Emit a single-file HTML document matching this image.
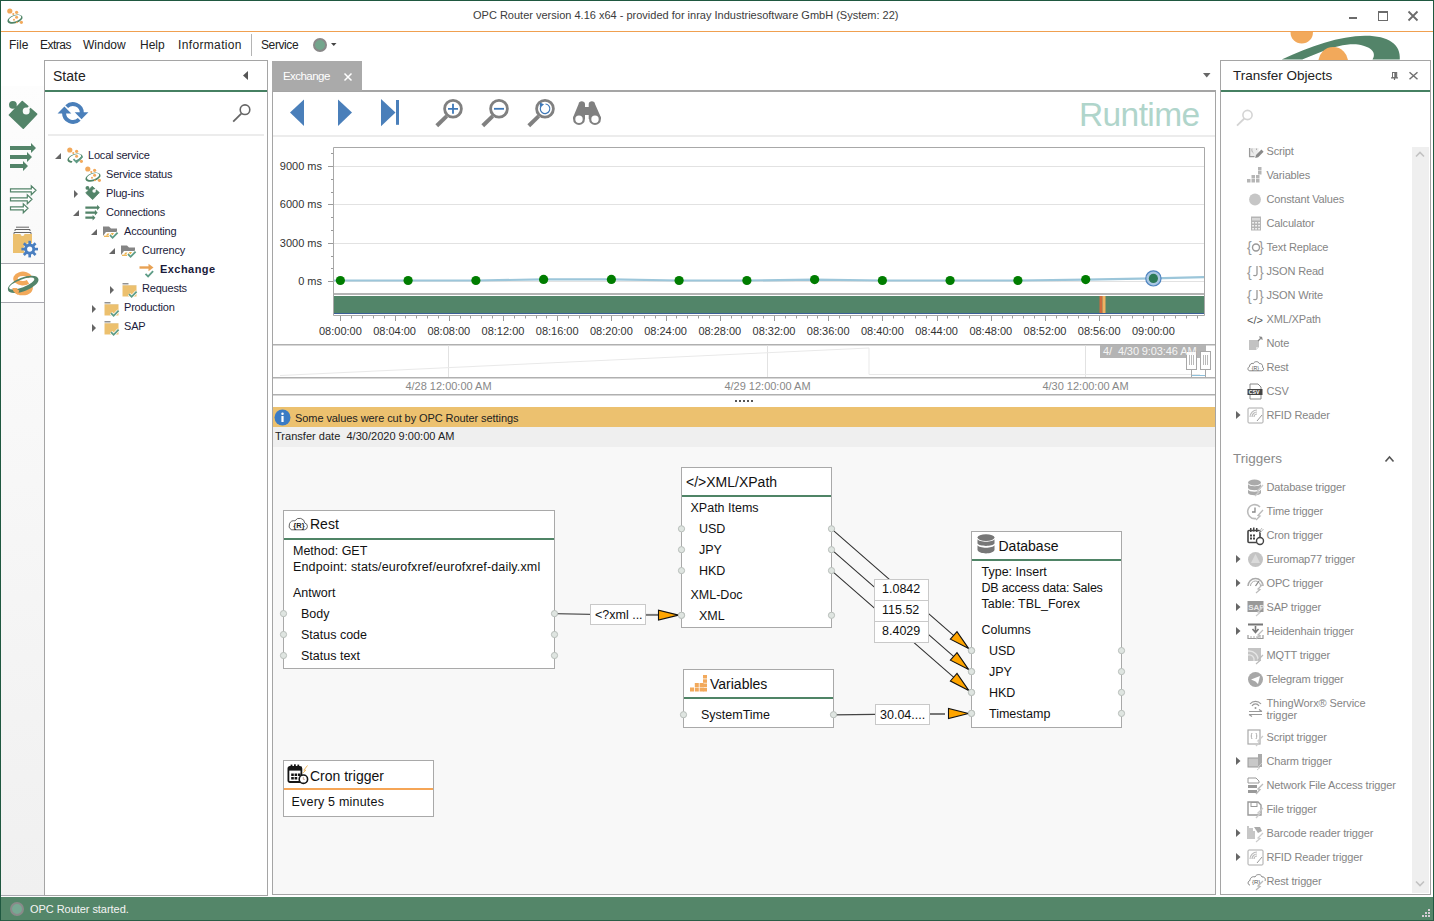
<!DOCTYPE html>
<html><head><meta charset="utf-8">
<style>
*{box-sizing:border-box;margin:0;padding:0}
html,body{width:1434px;height:921px;overflow:hidden;background:#fff;font-family:"Liberation Sans",sans-serif;color:#1e1e1e}
.a{position:absolute}
.t{position:absolute;white-space:nowrap;line-height:1}
svg{position:absolute;overflow:visible}
</style></head><body>
<!-- window frame -->
<div class="a" style="left:0;top:0;width:1434px;height:921px;border:1px solid #1f5840;border-bottom:none"></div>
<div class="a" style="left:1px;top:31px;width:1432px;height:1px;background:#f0a050"></div>

<!-- TITLEBAR -->
<svg style="left:7px;top:8px" width="18" height="18"><use href="#opclogo"/></svg>
<div class="t" style="left:473px;top:10px;font-size:11px;color:#3c3c3c">OPC Router version 4.16 x64 - provided for inray Industriesoftware GmbH (System: 22)</div>
<div class="a" style="left:1349px;top:17px;width:8px;height:2px;background:#6b6b6b"></div>
<div class="a" style="left:1378px;top:11px;width:10px;height:10px;border:1px solid #6b6b6b;border-top-width:2px"></div>
<svg style="left:1408px;top:11px" width="10" height="10"><path d="M0.5 0.5L9.5 9.5M9.5 0.5L0.5 9.5" stroke="#6b6b6b" stroke-width="1.8"/></svg>
<!-- big logo -->
<svg style="left:1270px;top:32px;overflow:hidden" width="150" height="28" viewBox="0 0 150 28">
<circle cx="31.75" cy="0.4" r="11.2" fill="#f2a95b"/>
<path d="M11.7 27.5 C 40 14, 70 4, 95 3.7 C 118 3.5, 131 12, 129.8 27.5 L102.5 27.5 C 106 22, 104 15, 88 12.4 C 78 11.5, 65 14, 50.8 20 L 32.2 27.5 Z" fill="#538469"/>
<circle cx="63.2" cy="30" r="14.9" fill="#f2a95b"/>
</svg>

<!-- MENU -->
<div class="t" style="left:9px;top:39px;font-size:12px;color:#222">File</div>
<div class="t" style="left:40px;top:39px;font-size:12px;color:#222;letter-spacing:-0.5px">Extras</div>
<div class="t" style="left:83px;top:39px;font-size:12px;color:#222">Window</div>
<div class="t" style="left:140px;top:39px;font-size:12px;color:#222">Help</div>
<div class="t" style="left:178px;top:39px;font-size:12px;color:#222;letter-spacing:0.35px">Information</div>
<div class="a" style="left:251px;top:34px;width:1px;height:22px;background:#b4b4b4"></div>
<div class="t" style="left:261px;top:39px;font-size:12px;color:#222;letter-spacing:-0.4px">Service</div>
<div class="a" style="left:313px;top:38px;width:14px;height:14px;border-radius:50%;background:#73a58c;border:2px solid #888"></div>
<svg style="left:331px;top:43px" width="6" height="4"><path d="M0 0H5.5L2.75 3Z" fill="#444"/></svg>

<!-- LEFT STRIP -->
<svg width="0" height="0" style="position:absolute">
<defs>
<g id="puzzle"><path d="M5.4 20 L18.3 6.6 L32.6 19.2 L19.3 33.2 Z" fill="#538469" stroke="#538469" stroke-width="1.6" stroke-linejoin="round"/><circle cx="8.9" cy="9.8" r="3.9" fill="#538469"/><path d="M8.9 9.8L13 13.8" stroke="#538469" stroke-width="2.8"/><circle cx="22.2" cy="15.9" r="3.5" fill="#fafafa"/><path d="M22.2 15.9L26.5 11" stroke="#fafafa" stroke-width="2.4"/></g>
<g id="arrows3"><path d="M6 8H27V5L32 10L27 15V12H6Z M6 17H23V14L28 19L23 24V21H6Z M6 26H19V23L24 28L19 33V30H6Z" fill="#538469"/></g>
<g id="chk"><path d="M0 3.2L2.6 5.8L7.6 0.6" fill="none" stroke="#5e9c86" stroke-width="1.8"/></g>
<g id="fold"><path d="M0.5 3 H14.5 V13.5 H0.5 Z" fill="#ecc06e"/><path d="M0.5 0.8 H6.5" stroke="#777" stroke-width="1.2"/><path d="M0.5 2.5H14.5" stroke="#d9a94f" stroke-width="0.6"/><g transform="translate(7,8)"><path d="M0 3.2L2.6 5.8L7.6 0.6" fill="none" stroke="#fff" stroke-width="3.2"/><use href="#chk"/></g></g>
<g id="foldopen"><path d="M0 0.5 H6 L8 2.5 H14 V6 H3 L0 10Z" fill="#858585"/><path d="M3 6.5 H14 L11.5 12.5 H0.3Z" fill="#fff"/><path d="M2.8 9.5 L4.5 7.4 H6.5 L5 9.5 Z M6.6 9.6 L8.5 7 H11 L9.5 9.6Z" fill="#ecb24c"/><path d="M1 10.3H6" stroke="#ecb24c" stroke-width="1.2"/><g transform="translate(7,6)"><path d="M0 3.2L2.6 5.8L7.6 0.6" fill="none" stroke="#fff" stroke-width="3.2"/><use href="#chk"/></g></g>
<g id="opclogo"><g transform="rotate(-19 8 11.2)"><path fill-rule="evenodd" fill="#4f8466" d="M0.1 11.2 A7.9 4.1 0 1 0 15.9 11.2 A7.9 4.1 0 1 0 0.1 11.2Z M1.9 10.6 A6.4 2.9 0 1 0 14.7 10.6 A6.4 2.9 0 1 0 1.9 10.6Z"/></g><circle cx="2.8" cy="3" r="2.6" fill="#f2a95b"/><circle cx="9.6" cy="4.3" r="1.6" fill="#f2a95b"/><circle cx="6.3" cy="6" r="1.1" fill="#f2a95b"/><circle cx="9.6" cy="9.3" r="1.5" fill="#f2a95b"/><circle cx="7" cy="11.7" r="1" fill="#f2a95b"/><circle cx="14.4" cy="14.3" r="1.6" fill="#f2a95b"/><circle cx="9.9" cy="14.3" r="0.9" fill="#f2a95b"/></g>
<g id="opclogochk"><g transform="rotate(-19 8 11.2)"><path fill-rule="evenodd" fill="#4f8466" d="M0.1 11.2 A7.9 4.1 0 1 0 15.9 11.2 A7.9 4.1 0 1 0 0.1 11.2Z M1.9 10.6 A6.4 2.9 0 1 0 14.7 10.6 A6.4 2.9 0 1 0 1.9 10.6Z"/></g><path d="M7 11 L11 16 L17 9 V17 H4Z" fill="#fff"/><path d="M6.5 12.2 L9.6 15.3 L15.5 9.3" fill="none" stroke="#5e9c86" stroke-width="1.8"/><circle cx="2.8" cy="3" r="2.6" fill="#f2a95b"/><circle cx="9.6" cy="4.3" r="1.6" fill="#f2a95b"/><circle cx="6.3" cy="6" r="1.1" fill="#f2a95b"/><circle cx="9.6" cy="9.3" r="1.5" fill="#f2a95b"/><circle cx="14.4" cy="14.3" r="1.6" fill="#f2a95b"/></g>
<g id="exp"><path d="M0 0L4 4L0 8Z" fill="#666"/></g>
<g id="col"><path d="M6 0V6H0Z" fill="#666"/></g>
</defs></svg>
<div class="a" style="left:1px;top:86px;width:44px;height:178px;background:linear-gradient(#fdfdfd,#f9f9f9);border-right:1px solid #a9a9b0;border-bottom:1px solid #a9a9b0"></div>
<div class="a" style="left:1px;top:302px;width:44px;height:594px;background:linear-gradient(#fafafa,#f0f0f0);border-right:1px solid #a9a9b0;border-top:1px solid #a9a9b0;border-bottom:1px solid #a9a9b0"></div>
<svg style="left:4px;top:95px" width="40" height="40"><use href="#puzzle"/></svg>
<svg style="left:4px;top:138px" width="40" height="40"><use href="#arrows3"/></svg>
<svg style="left:4px;top:180px" width="40" height="40"><path d="M6.5 50.8H27.3V47.8L32 52.3L27.3 56.8V53.8H6.5Z M6.5 59.8H23.3V56.8L28 61.3L23.3 65.8V62.8H6.5Z M6.5 68.8H19.3V65.8L24 70.3L19.3 74.8V71.8H6.5Z" transform="translate(0,-42)" fill="#fff" stroke="#538469" stroke-width="1.2"/></svg>
<svg style="left:4px;top:220px" width="40" height="44">
<path d="M12 7.2 H25" stroke="#666" stroke-width="1"/><path d="M11 11 V9.5 H26 V11" fill="none" stroke="#666" stroke-width="1"/><path d="M10 14 V12.5 H27 V14" fill="none" stroke="#666" stroke-width="1"/>
<path d="M9 14 H16.5 A2 2 0 0 0 20.5 14 H28 V33 H9Z" fill="#ecc06e"/>
<g transform="translate(25.7 29.1)"><circle r="6.2" fill="#fff"/><g fill="#4a7fc0"><rect x="-1.3" y="-8.3" width="2.6" height="16.6"/><rect y="-1.3" x="-8.3" height="2.6" width="16.6"/><rect x="-1.3" y="-8.3" width="2.6" height="16.6" transform="rotate(45)"/><rect x="-1.3" y="-8.3" width="2.6" height="16.6" transform="rotate(-45)"/></g><circle r="5.6" fill="#4a7fc0"/><circle r="2.6" fill="#fff"/></g>
</svg>
<div class="a" style="left:44px;top:264px;width:1px;height:38px;background:#fff"></div>
<svg style="left:4px;top:264px" width="40" height="36" viewBox="0 0 40 36">
<path d="M26 13.3 A7.4 4.7 0 1 0 24 17.9" fill="none" stroke="#f2a95b" stroke-width="4.4"/>
<path d="M10.8 24.2 A7.9 5 0 1 0 25.5 21.6" fill="none" stroke="#f2a95b" stroke-width="4.4"/>
<g transform="rotate(-21 19 20)"><path fill-rule="evenodd" fill="#538469" d="M2.8 20.5 A16.2 6.8 0 1 0 35.2 20.5 A16.2 6.8 0 1 0 2.8 20.5Z M4.6 19.1 A13.4 3.9 0 1 0 31.4 19.1 A13.4 3.9 0 1 0 4.6 19.1Z"/></g>
<path d="M10.8 24.2 A7.9 5 0 0 0 14.5 28.6" fill="none" stroke="#f2a95b" stroke-width="4.4"/>
</svg>

<!-- STATE PANEL -->
<div class="a" style="left:44px;top:60px;width:224px;height:836px;border:1px solid #a5a5a5;background:#fff"></div>
<div class="a" style="left:45px;top:90px;width:222px;height:2px;background:#468062"></div>
<div class="t" style="left:53px;top:69px;font-size:14px;color:#222">State</div>
<svg style="left:243px;top:71px" width="6" height="10"><path d="M0 4.5L5 0V9Z" fill="#555"/></svg>
<svg style="left:54px;top:98px" width="38" height="30">
<path d="M12.66 8.7 A8.9 8.9 0 0 1 27.85 15" fill="none" stroke="#4a7fba" stroke-width="4"/>
<path d="M20.7 14.3 H34.4 L27.5 21.2Z" fill="#4a7fba"/>
<path d="M10.05 15 A8.9 8.9 0 0 0 25.24 21.3" fill="none" stroke="#4a7fba" stroke-width="4"/>
<path d="M3.6 15.6 H17.3 L10.4 8.6Z" fill="#4a7fba"/>
</svg>
<svg style="left:230px;top:100px" width="22" height="24"><circle cx="15" cy="9.7" r="4.8" fill="none" stroke="#666" stroke-width="1.6"/><path d="M11.3 13.7L3.2 21.6" stroke="#666" stroke-width="1.8"/></svg>
<div class="a" style="left:48px;top:134px;width:216px;height:2px;background:#ececec"></div>
<div style="font-size:11px;letter-spacing:-0.2px;color:#1a1a3a">
<svg style="left:55px;top:153px" width="7" height="7"><use href="#col"/></svg>
<svg style="left:67px;top:147px" width="18" height="18"><use href="#opclogochk"/></svg>
<div class="t" style="left:88px;top:150px">Local service</div>
<svg style="left:85px;top:166px" width="18" height="18"><use href="#opclogo"/></svg>
<div class="t" style="left:106px;top:169px">Service status</div>
<svg style="left:74px;top:190px" width="6" height="9"><use href="#exp"/></svg>
<svg style="left:83px;top:183px" width="20" height="20"><g transform="scale(0.5)"><use href="#puzzle"/></g></svg>
<div class="t" style="left:106px;top:188px">Plug-ins</div>
<svg style="left:73px;top:210px" width="7" height="7"><use href="#col"/></svg>
<svg style="left:82px;top:201.5px" width="22" height="22"><g transform="scale(0.56)"><use href="#arrows3"/></g></svg>
<div class="t" style="left:106px;top:207px">Connections</div>
<svg style="left:91px;top:229px" width="7" height="7"><use href="#col"/></svg>
<svg style="left:103px;top:226px" width="18" height="16"><use href="#foldopen"/></svg>
<div class="t" style="left:124px;top:226px">Accounting</div>
<svg style="left:109px;top:248px" width="7" height="7"><use href="#col"/></svg>
<svg style="left:121px;top:245px" width="18" height="16"><use href="#foldopen"/></svg>
<div class="t" style="left:142px;top:245px">Currency</div>
<svg style="left:139px;top:263px" width="18" height="16"><path d="M0.5 4.5H11" stroke="#e8a255" stroke-width="2.4"/><path d="M9.5 0.8L14.5 4.5L9.5 8.2Z" fill="#e8a255"/><g transform="translate(6.5,7.6)"><path d="M0 3.2L2.6 5.8L7.6 0.6" fill="none" stroke="#fff" stroke-width="3.2"/><use href="#chk"/></g></svg>
<div class="t" style="left:160px;top:264px;font-weight:bold;letter-spacing:0.45px">Exchange</div>
<svg style="left:110px;top:286px" width="6" height="9"><use href="#exp"/></svg>
<svg style="left:122px;top:283px" width="18" height="16"><use href="#fold"/></svg>
<div class="t" style="left:142px;top:283px">Requests</div>
<svg style="left:92px;top:305px" width="6" height="9"><use href="#exp"/></svg>
<svg style="left:104px;top:302px" width="18" height="16"><use href="#fold"/></svg>
<div class="t" style="left:124px;top:302px">Production</div>
<svg style="left:92px;top:324px" width="6" height="9"><use href="#exp"/></svg>
<svg style="left:104px;top:321px" width="18" height="16"><use href="#fold"/></svg>
<div class="t" style="left:124px;top:321px">SAP</div>
</div>

<!-- DOC AREA -->
<div class="a" style="left:272px;top:90px;width:944px;height:805px;border:1px solid #a5a5a5;border-top:2px solid #a5a5a5;background:#fff"></div>
<div class="a" style="left:272px;top:61px;width:90px;height:30px;background:#aaaaaa"></div>
<div class="t" style="left:283px;top:71px;font-size:11.5px;letter-spacing:-0.55px;color:#fff">Exchange</div>
<svg style="left:344px;top:73px" width="8" height="8"><path d="M0.5 0.5L7.5 7.5M7.5 0.5L0.5 7.5" stroke="#fff" stroke-width="1.5"/></svg>
<svg style="left:1203px;top:73px" width="8" height="5"><path d="M0 0H7.5L3.75 4.5Z" fill="#666"/></svg>
<!-- toolbar -->
<svg style="left:273px;top:92px" width="942" height="46">
<path d="M17 20.5 L31 7.5 V34 Z" fill="#4a7fba"/>
<path d="M79 20.5 L65 7.5 V34 Z" fill="#4a7fba"/>
<path d="M122.5 20.5 L108 7 V34.2 Z" fill="#4a7fba"/>
<rect x="123" y="8" width="3" height="24.8" fill="#4a7fba"/>
<g transform="translate(180,16.8)"><circle r="8.4" fill="none" stroke="#808080" stroke-width="2.8"/><path d="M-6.3 7.3 L-16.2 17" stroke="#808080" stroke-width="4"/><path d="M-5 0H5M0 -5V5" stroke="#3e78b8" stroke-width="1.8"/></g>
<g transform="translate(226,16.8)"><circle r="8.4" fill="none" stroke="#808080" stroke-width="2.8"/><path d="M-6.3 7.3 L-16.2 17" stroke="#808080" stroke-width="4"/><path d="M-5 0H5" stroke="#3e78b8" stroke-width="1.8"/></g>
<g transform="translate(272,16.8)"><circle r="8.4" fill="none" stroke="#808080" stroke-width="2.8"/><path d="M-6.3 7.3 L-16.2 17" stroke="#808080" stroke-width="4"/><path d="M-2.6 -4 A4.8 4.8 0 1 0 0.5 -4.8" fill="none" stroke="#3e78b8" stroke-width="1.2"/><path d="M-5.2 -1.8 L-4.9 -6.3 L-0.9 -4.2Z" fill="#3e78b8"/></g>
<g fill="#808080"><path d="M305.6 12 C305.6 8.3 312 8.3 312 12 V27 H300 V25.5Z"/><path d="M322 12 C322 8.3 315.7 8.3 315.7 12 V27 H328 V25.5Z"/><rect x="311" y="15" width="6" height="8"/></g>
<circle cx="306" cy="27.2" r="4.8" fill="#fff" stroke="#808080" stroke-width="2.2"/><circle cx="322" cy="27.2" r="4.8" fill="#fff" stroke="#808080" stroke-width="2.2"/>
</svg>
<div class="t" style="left:1079px;top:98px;font-size:33.5px;letter-spacing:-0.6px;color:#b0d5cb">Runtime</div>
<div class="a" style="left:273px;top:135px;width:942px;height:2px;background:#ececec"></div>
<!-- chart -->
<svg style="left:0;top:0" width="1434" height="921">
<path d="M334 166.5H1204" stroke="#e2e2e2" stroke-width="1"/>
<path d="M328 166.5H333" stroke="#9a9a9a" stroke-width="1"/>
<path d="M334 204.5H1204" stroke="#e2e2e2" stroke-width="1"/>
<path d="M328 204.5H333" stroke="#9a9a9a" stroke-width="1"/>
<path d="M334 243.5H1204" stroke="#e2e2e2" stroke-width="1"/>
<path d="M328 243.5H333" stroke="#9a9a9a" stroke-width="1"/>
<path d="M334 281.5H1204" stroke="#e2e2e2" stroke-width="1"/>
<path d="M328 281.5H333" stroke="#9a9a9a" stroke-width="1"/>
<path d="M331 153.5H333" stroke="#9a9a9a" stroke-width="1"/>
<path d="M331 179.5H333" stroke="#9a9a9a" stroke-width="1"/>
<path d="M331 192.5H333" stroke="#9a9a9a" stroke-width="1"/>
<path d="M331 217.5H333" stroke="#9a9a9a" stroke-width="1"/>
<path d="M331 230.5H333" stroke="#9a9a9a" stroke-width="1"/>
<path d="M331 256.5H333" stroke="#9a9a9a" stroke-width="1"/>
<path d="M331 268.5H333" stroke="#9a9a9a" stroke-width="1"/>
<path d="M333.5 315.5V147.5H1204.5V315.5H333.5" fill="none" stroke="#a8a8a8" stroke-width="1"/>
<path d="M334 280.5 L340.4 280.5 L408.1 280.5 L475.9 280.5 L543.6 279.4 L611.4 279.4 L679.1 280.5 L746.9 280.5 L814.6 279.6 L882.4 280.5 L950.1 280.5 L1017.9 280.5 L1085.7 279.6 L1153.4 278.4 L1204 277.2" fill="none" stroke="#9cc6da" stroke-width="2.2"/>
<circle cx="340.4" cy="280.5" r="4.6" fill="#007d00"/>
<circle cx="408.1" cy="280.5" r="4.6" fill="#007d00"/>
<circle cx="475.9" cy="280.5" r="4.6" fill="#007d00"/>
<circle cx="543.6" cy="279.4" r="4.6" fill="#007d00"/>
<circle cx="611.4" cy="279.4" r="4.6" fill="#007d00"/>
<circle cx="679.1" cy="280.5" r="4.6" fill="#007d00"/>
<circle cx="746.9" cy="280.5" r="4.6" fill="#007d00"/>
<circle cx="814.6" cy="279.6" r="4.6" fill="#007d00"/>
<circle cx="882.4" cy="280.5" r="4.6" fill="#007d00"/>
<circle cx="950.1" cy="280.5" r="4.6" fill="#007d00"/>
<circle cx="1017.9" cy="280.5" r="4.6" fill="#007d00"/>
<circle cx="1085.7" cy="279.6" r="4.6" fill="#007d00"/>
<circle cx="1153.4" cy="278.4" r="7.6" fill="#a9c7e3" stroke="#4f84c0" stroke-width="1.2"/>
<circle cx="1153.4" cy="278.4" r="4.6" fill="#2c7a58"/>
<rect x="334" y="293" width="870" height="2" fill="#b4b4b4"/>
<rect x="334" y="296" width="870" height="17.5" fill="#528569"/>
<rect x="334" y="313" width="870" height="1" fill="#3b5f96"/>
<rect x="1099.5" y="296" width="3" height="17" fill="#cf6a3e"/><rect x="1102.5" y="296" width="3" height="17" fill="#f0b262"/>
<path d="M340.5 316V321" stroke="#9a9a9a" stroke-width="1"/>
<path d="M351.5 316V318.5" stroke="#9a9a9a" stroke-width="1"/>
<path d="M362.5 316V318.5" stroke="#9a9a9a" stroke-width="1"/>
<path d="M373.5 316V318.5" stroke="#9a9a9a" stroke-width="1"/>
<path d="M384.5 316V318.5" stroke="#9a9a9a" stroke-width="1"/>
<path d="M395.5 316V321" stroke="#9a9a9a" stroke-width="1"/>
<path d="M405.5 316V318.5" stroke="#9a9a9a" stroke-width="1"/>
<path d="M416.5 316V318.5" stroke="#9a9a9a" stroke-width="1"/>
<path d="M427.5 316V318.5" stroke="#9a9a9a" stroke-width="1"/>
<path d="M438.5 316V318.5" stroke="#9a9a9a" stroke-width="1"/>
<path d="M449.5 316V321" stroke="#9a9a9a" stroke-width="1"/>
<path d="M460.5 316V318.5" stroke="#9a9a9a" stroke-width="1"/>
<path d="M470.5 316V318.5" stroke="#9a9a9a" stroke-width="1"/>
<path d="M481.5 316V318.5" stroke="#9a9a9a" stroke-width="1"/>
<path d="M492.5 316V318.5" stroke="#9a9a9a" stroke-width="1"/>
<path d="M503.5 316V321" stroke="#9a9a9a" stroke-width="1"/>
<path d="M514.5 316V318.5" stroke="#9a9a9a" stroke-width="1"/>
<path d="M525.5 316V318.5" stroke="#9a9a9a" stroke-width="1"/>
<path d="M536.5 316V318.5" stroke="#9a9a9a" stroke-width="1"/>
<path d="M546.5 316V318.5" stroke="#9a9a9a" stroke-width="1"/>
<path d="M557.5 316V321" stroke="#9a9a9a" stroke-width="1"/>
<path d="M568.5 316V318.5" stroke="#9a9a9a" stroke-width="1"/>
<path d="M579.5 316V318.5" stroke="#9a9a9a" stroke-width="1"/>
<path d="M590.5 316V318.5" stroke="#9a9a9a" stroke-width="1"/>
<path d="M601.5 316V318.5" stroke="#9a9a9a" stroke-width="1"/>
<path d="M611.5 316V321" stroke="#9a9a9a" stroke-width="1"/>
<path d="M622.5 316V318.5" stroke="#9a9a9a" stroke-width="1"/>
<path d="M633.5 316V318.5" stroke="#9a9a9a" stroke-width="1"/>
<path d="M644.5 316V318.5" stroke="#9a9a9a" stroke-width="1"/>
<path d="M655.5 316V318.5" stroke="#9a9a9a" stroke-width="1"/>
<path d="M666.5 316V321" stroke="#9a9a9a" stroke-width="1"/>
<path d="M676.5 316V318.5" stroke="#9a9a9a" stroke-width="1"/>
<path d="M687.5 316V318.5" stroke="#9a9a9a" stroke-width="1"/>
<path d="M698.5 316V318.5" stroke="#9a9a9a" stroke-width="1"/>
<path d="M709.5 316V318.5" stroke="#9a9a9a" stroke-width="1"/>
<path d="M720.5 316V321" stroke="#9a9a9a" stroke-width="1"/>
<path d="M731.5 316V318.5" stroke="#9a9a9a" stroke-width="1"/>
<path d="M741.5 316V318.5" stroke="#9a9a9a" stroke-width="1"/>
<path d="M752.5 316V318.5" stroke="#9a9a9a" stroke-width="1"/>
<path d="M763.5 316V318.5" stroke="#9a9a9a" stroke-width="1"/>
<path d="M774.5 316V321" stroke="#9a9a9a" stroke-width="1"/>
<path d="M785.5 316V318.5" stroke="#9a9a9a" stroke-width="1"/>
<path d="M796.5 316V318.5" stroke="#9a9a9a" stroke-width="1"/>
<path d="M807.5 316V318.5" stroke="#9a9a9a" stroke-width="1"/>
<path d="M817.5 316V318.5" stroke="#9a9a9a" stroke-width="1"/>
<path d="M828.5 316V321" stroke="#9a9a9a" stroke-width="1"/>
<path d="M839.5 316V318.5" stroke="#9a9a9a" stroke-width="1"/>
<path d="M850.5 316V318.5" stroke="#9a9a9a" stroke-width="1"/>
<path d="M861.5 316V318.5" stroke="#9a9a9a" stroke-width="1"/>
<path d="M872.5 316V318.5" stroke="#9a9a9a" stroke-width="1"/>
<path d="M882.5 316V321" stroke="#9a9a9a" stroke-width="1"/>
<path d="M893.5 316V318.5" stroke="#9a9a9a" stroke-width="1"/>
<path d="M904.5 316V318.5" stroke="#9a9a9a" stroke-width="1"/>
<path d="M915.5 316V318.5" stroke="#9a9a9a" stroke-width="1"/>
<path d="M926.5 316V318.5" stroke="#9a9a9a" stroke-width="1"/>
<path d="M937.5 316V321" stroke="#9a9a9a" stroke-width="1"/>
<path d="M947.5 316V318.5" stroke="#9a9a9a" stroke-width="1"/>
<path d="M958.5 316V318.5" stroke="#9a9a9a" stroke-width="1"/>
<path d="M969.5 316V318.5" stroke="#9a9a9a" stroke-width="1"/>
<path d="M980.5 316V318.5" stroke="#9a9a9a" stroke-width="1"/>
<path d="M991.5 316V321" stroke="#9a9a9a" stroke-width="1"/>
<path d="M1002.5 316V318.5" stroke="#9a9a9a" stroke-width="1"/>
<path d="M1012.5 316V318.5" stroke="#9a9a9a" stroke-width="1"/>
<path d="M1023.5 316V318.5" stroke="#9a9a9a" stroke-width="1"/>
<path d="M1034.5 316V318.5" stroke="#9a9a9a" stroke-width="1"/>
<path d="M1045.5 316V321" stroke="#9a9a9a" stroke-width="1"/>
<path d="M1056.5 316V318.5" stroke="#9a9a9a" stroke-width="1"/>
<path d="M1067.5 316V318.5" stroke="#9a9a9a" stroke-width="1"/>
<path d="M1078.5 316V318.5" stroke="#9a9a9a" stroke-width="1"/>
<path d="M1088.5 316V318.5" stroke="#9a9a9a" stroke-width="1"/>
<path d="M1099.5 316V321" stroke="#9a9a9a" stroke-width="1"/>
<path d="M1110.5 316V318.5" stroke="#9a9a9a" stroke-width="1"/>
<path d="M1121.5 316V318.5" stroke="#9a9a9a" stroke-width="1"/>
<path d="M1132.5 316V318.5" stroke="#9a9a9a" stroke-width="1"/>
<path d="M1143.5 316V318.5" stroke="#9a9a9a" stroke-width="1"/>
<path d="M1153.5 316V321" stroke="#9a9a9a" stroke-width="1"/>
<path d="M1164.5 316V318.5" stroke="#9a9a9a" stroke-width="1"/>
<path d="M1175.5 316V318.5" stroke="#9a9a9a" stroke-width="1"/>
<path d="M1186.5 316V318.5" stroke="#9a9a9a" stroke-width="1"/>
<path d="M1197.5 316V318.5" stroke="#9a9a9a" stroke-width="1"/>
<rect x="273" y="344" width="942" height="1.5" fill="#b0b0b0"/>
<rect x="273" y="377" width="942" height="1.5" fill="#b0b0b0"/>
<rect x="273" y="394" width="942" height="1.5" fill="#b0b0b0"/>
<path d="M448.5 345.5V377" stroke="#e2e2e2" stroke-width="1"/>
<path d="M767.5 345.5V377" stroke="#e2e2e2" stroke-width="1"/>
<path d="M1085.5 345.5V377" stroke="#e2e2e2" stroke-width="1"/>
<path d="M280 375.5 L869 348 V374.5 H1200" fill="none" stroke="#e9e9e9" stroke-width="1"/>
<rect x="1100" y="345" width="106" height="13" fill="#b4b4b4"/>
<rect x="1186.5" y="351.5" width="10" height="18" fill="#fff" stroke="#a8a8a8"/><rect x="1200.5" y="351.5" width="10" height="18" fill="#fff" stroke="#a8a8a8"/>
<path d="M1189.5 355V365M1191.5 355V365M1193.5 355V365M1203.5 355V365M1205.5 355V365M1207.5 355V365" stroke="#a8a8a8" stroke-width="0.8"/>
<path d="M1191.5 369.5V377M1205.5 369.5V377" stroke="#a8a8a8"/><path d="M1192 375.5H1205" stroke="#8cc0dc" stroke-width="1"/>
<rect x="735" y="400" width="2" height="2" fill="#555"/>
<rect x="739" y="400" width="2" height="2" fill="#555"/>
<rect x="743" y="400" width="2" height="2" fill="#555"/>
<rect x="747" y="400" width="2" height="2" fill="#555"/>
<rect x="751" y="400" width="2" height="2" fill="#555"/>
</svg>
<div class="t" style="left:222px;width:100px;text-align:right;top:161px;font-size:11px;color:#333">9000 ms</div>
<div class="t" style="left:222px;width:100px;text-align:right;top:199px;font-size:11px;color:#333">6000 ms</div>
<div class="t" style="left:222px;width:100px;text-align:right;top:238px;font-size:11px;color:#333">3000 ms</div>
<div class="t" style="left:222px;width:100px;text-align:right;top:276px;font-size:11px;color:#333">0 ms</div>
<div class="t" style="left:310.4px;width:60px;text-align:center;top:326px;font-size:11px;color:#333">08:00:00</div>
<div class="t" style="left:364.6px;width:60px;text-align:center;top:326px;font-size:11px;color:#333">08:04:00</div>
<div class="t" style="left:418.8px;width:60px;text-align:center;top:326px;font-size:11px;color:#333">08:08:00</div>
<div class="t" style="left:473.0px;width:60px;text-align:center;top:326px;font-size:11px;color:#333">08:12:00</div>
<div class="t" style="left:527.2px;width:60px;text-align:center;top:326px;font-size:11px;color:#333">08:16:00</div>
<div class="t" style="left:581.4px;width:60px;text-align:center;top:326px;font-size:11px;color:#333">08:20:00</div>
<div class="t" style="left:635.6px;width:60px;text-align:center;top:326px;font-size:11px;color:#333">08:24:00</div>
<div class="t" style="left:689.8px;width:60px;text-align:center;top:326px;font-size:11px;color:#333">08:28:00</div>
<div class="t" style="left:744.0px;width:60px;text-align:center;top:326px;font-size:11px;color:#333">08:32:00</div>
<div class="t" style="left:798.2px;width:60px;text-align:center;top:326px;font-size:11px;color:#333">08:36:00</div>
<div class="t" style="left:852.4px;width:60px;text-align:center;top:326px;font-size:11px;color:#333">08:40:00</div>
<div class="t" style="left:906.6px;width:60px;text-align:center;top:326px;font-size:11px;color:#333">08:44:00</div>
<div class="t" style="left:960.8px;width:60px;text-align:center;top:326px;font-size:11px;color:#333">08:48:00</div>
<div class="t" style="left:1015.0px;width:60px;text-align:center;top:326px;font-size:11px;color:#333">08:52:00</div>
<div class="t" style="left:1069.2px;width:60px;text-align:center;top:326px;font-size:11px;color:#333">08:56:00</div>
<div class="t" style="left:1123.4px;width:60px;text-align:center;top:326px;font-size:11px;color:#333">09:00:00</div>
<div class="t" style="left:388.5px;width:120px;text-align:center;top:381px;font-size:11px;color:#888">4/28 12:00:00 AM</div>
<div class="t" style="left:707.5px;width:120px;text-align:center;top:381px;font-size:11px;color:#888">4/29 12:00:00 AM</div>
<div class="t" style="left:1025.5px;width:120px;text-align:center;top:381px;font-size:11px;color:#888">4/30 12:00:00 AM</div>
<div class="t" style="left:1103px;top:346px;font-size:11px;color:#f4f4f4;letter-spacing:-0.1px">4/&nbsp; 4/30 9:03:46 AM</div>
<!-- info -->
<div class="a" style="left:273px;top:407px;width:942px;height:20px;background:#ecc16f"></div>
<svg style="left:274px;top:409px" width="18" height="17"><circle cx="8.5" cy="8.5" r="8" fill="#3b7bc4"/><rect x="7.4" y="7" width="2.2" height="6" fill="#fff"/><circle cx="8.5" cy="4.7" r="1.25" fill="#fff"/></svg>
<div class="t" style="left:295px;top:413px;font-size:11px;letter-spacing:-0.08px;color:#222">Some values were cut by OPC Router settings</div>
<div class="a" style="left:273px;top:427px;width:942px;height:20px;background:#efefef"></div>
<div class="t" style="left:275px;top:431px;font-size:11px;letter-spacing:0.02px;color:#222">Transfer date&nbsp; 4/30/2020 9:00:00 AM</div>
<div class="a" style="left:273px;top:447px;width:942px;height:447px;background:#f8f8f8"></div>
<svg style="left:0;top:0" width="1434" height="921">
<path d="M555 613.6 L590 614.3" stroke="#555" stroke-width="1.3"/>
<path d="M646 614.9 H660" stroke="#777" stroke-width="2"/>
<path d="M831.5 528.8 L971 650.6 M831.5 549.7 L971 671.6 M831.5 570.6 L971 692.4" stroke="#333" stroke-width="1.1"/>
<path d="M833.6 714.9 L875 714.3" stroke="#444" stroke-width="1.3"/><path d="M930 714 H945" stroke="#777" stroke-width="2"/>
<rect x="283.5" y="510.5" width="271" height="158" fill="#fff" stroke="#a9a9a9"/>
<rect x="284" y="538" width="270" height="2" fill="#4f8466"/>
<circle cx="283.5" cy="613.6" r="3.1" fill="#dfe5e1" stroke="#b9bfbb" stroke-width="1"/>
<circle cx="554.5" cy="613.6" r="3.1" fill="#dfe5e1" stroke="#b9bfbb" stroke-width="1"/>
<circle cx="283.5" cy="634.5" r="3.1" fill="#dfe5e1" stroke="#b9bfbb" stroke-width="1"/>
<circle cx="554.5" cy="634.5" r="3.1" fill="#dfe5e1" stroke="#b9bfbb" stroke-width="1"/>
<circle cx="283.5" cy="655.5" r="3.1" fill="#dfe5e1" stroke="#b9bfbb" stroke-width="1"/>
<circle cx="554.5" cy="655.5" r="3.1" fill="#dfe5e1" stroke="#b9bfbb" stroke-width="1"/>
<rect x="681.5" y="467.5" width="150" height="160" fill="#fff" stroke="#a9a9a9"/>
<rect x="682" y="495" width="149" height="2" fill="#4f8466"/>
<circle cx="681.5" cy="528.8" r="3.1" fill="#dfe5e1" stroke="#b9bfbb" stroke-width="1"/>
<circle cx="831.5" cy="528.8" r="3.1" fill="#dfe5e1" stroke="#b9bfbb" stroke-width="1"/>
<circle cx="681.5" cy="549.7" r="3.1" fill="#dfe5e1" stroke="#b9bfbb" stroke-width="1"/>
<circle cx="831.5" cy="549.7" r="3.1" fill="#dfe5e1" stroke="#b9bfbb" stroke-width="1"/>
<circle cx="681.5" cy="570.6" r="3.1" fill="#dfe5e1" stroke="#b9bfbb" stroke-width="1"/>
<circle cx="831.5" cy="570.6" r="3.1" fill="#dfe5e1" stroke="#b9bfbb" stroke-width="1"/>
<circle cx="681.5" cy="615.3" r="3.1" fill="#dfe5e1" stroke="#b9bfbb" stroke-width="1"/>
<circle cx="831.5" cy="615.3" r="3.1" fill="#dfe5e1" stroke="#b9bfbb" stroke-width="1"/>
<rect x="971.5" y="531.5" width="150" height="196" fill="#fff" stroke="#a9a9a9"/>
<rect x="972" y="559" width="149" height="2" fill="#4f8466"/>
<circle cx="971.5" cy="650.6" r="3.1" fill="#dfe5e1" stroke="#b9bfbb" stroke-width="1"/>
<circle cx="1121.5" cy="650.6" r="3.1" fill="#dfe5e1" stroke="#b9bfbb" stroke-width="1"/>
<circle cx="971.5" cy="671.6" r="3.1" fill="#dfe5e1" stroke="#b9bfbb" stroke-width="1"/>
<circle cx="1121.5" cy="671.6" r="3.1" fill="#dfe5e1" stroke="#b9bfbb" stroke-width="1"/>
<circle cx="971.5" cy="692.4" r="3.1" fill="#dfe5e1" stroke="#b9bfbb" stroke-width="1"/>
<circle cx="1121.5" cy="692.4" r="3.1" fill="#dfe5e1" stroke="#b9bfbb" stroke-width="1"/>
<circle cx="971.5" cy="713.4" r="3.1" fill="#dfe5e1" stroke="#b9bfbb" stroke-width="1"/>
<circle cx="1121.5" cy="713.4" r="3.1" fill="#dfe5e1" stroke="#b9bfbb" stroke-width="1"/>
<rect x="683.5" y="669.5" width="150" height="58" fill="#fff" stroke="#a9a9a9"/>
<rect x="684" y="697" width="149" height="2" fill="#4f8466"/>
<circle cx="683.5" cy="714.7" r="3.1" fill="#dfe5e1" stroke="#b9bfbb" stroke-width="1"/>
<circle cx="833.5" cy="714.7" r="3.1" fill="#dfe5e1" stroke="#b9bfbb" stroke-width="1"/>
<rect x="283.5" y="760.5" width="150" height="56" fill="#fff" stroke="#a9a9a9"/>
<rect x="284" y="788" width="149" height="2" fill="#f5a556"/>
<rect x="590.5" y="604.5" width="55" height="20" fill="#fff" stroke="#c9c9c9"/>
<rect x="874.5" y="579.5" width="54" height="21" fill="#fff" stroke="#c9c9c9"/>
<rect x="874.5" y="600.5" width="54" height="21" fill="#fff" stroke="#c9c9c9"/>
<rect x="874.5" y="621.5" width="54" height="21" fill="#fff" stroke="#c9c9c9"/>
<rect x="875.5" y="704.5" width="54" height="20" fill="#fff" stroke="#c9c9c9"/>
<path d="M678.5 615.1 L658.5 620.1 L658.5 610.1Z" fill="#ffa500" stroke="#111" stroke-width="1.1" stroke-linejoin="miter"/>
<path d="M968.5 713.5 L948.5 718.5 L948.5 708.5Z" fill="#ffa500" stroke="#111" stroke-width="1.1" stroke-linejoin="miter"/>
<path d="M968.7 648.6 L950.4 639.2 L957.0 631.7Z" fill="#ffa500" stroke="#111" stroke-width="1.1" stroke-linejoin="miter"/>
<path d="M968.7 669.6 L950.4 660.2 L957.0 652.7Z" fill="#ffa500" stroke="#111" stroke-width="1.1" stroke-linejoin="miter"/>
<path d="M968.7 690.4 L950.4 681.0 L957.0 673.5Z" fill="#ffa500" stroke="#111" stroke-width="1.1" stroke-linejoin="miter"/>
<circle cx="681.5" cy="615.3" r="3.1" fill="#dfe5e1" stroke="#b9bfbb" stroke-width="1"/>
<circle cx="971.5" cy="713.4" r="3.1" fill="#dfe5e1" stroke="#b9bfbb" stroke-width="1"/>
<circle cx="971.5" cy="650.6" r="3.1" fill="#dfe5e1" stroke="#b9bfbb" stroke-width="1"/>
<circle cx="971.5" cy="671.6" r="3.1" fill="#dfe5e1" stroke="#b9bfbb" stroke-width="1"/>
<circle cx="971.5" cy="692.4" r="3.1" fill="#dfe5e1" stroke="#b9bfbb" stroke-width="1"/>
</svg>
<div class="t" style="left:310px;top:517px;font-size:14px;color:#111">Rest</div>
<svg style="left:287px;top:515px" width="22" height="17"><path d="M4.2 14.8 H17.3 A3.4 3.4 0 0 0 17.8 8.1 A5.3 5.3 0 0 0 8 5.8 A5 5 0 0 0 4.2 14.8 Z" fill="#fff" stroke="#555" stroke-width="0.9"/><text x="6.3" y="13" font-size="7.5" font-weight="bold" font-family="Liberation Sans" fill="#222">{R}</text></svg>
<div class="t" style="left:293px;top:545px;font-size:12.5px;color:#111">Method: GET</div>
<div class="t" style="left:293px;top:561px;font-size:12.5px;color:#111;letter-spacing:0.16px">Endpoint: stats/eurofxref/eurofxref-daily.xml</div>
<div class="t" style="left:293px;top:587px;font-size:12.5px;color:#111">Antwort</div>
<div class="t" style="left:301px;top:608px;font-size:12.5px;color:#111">Body</div>
<div class="t" style="left:301px;top:629px;font-size:12.5px;color:#111">Status code</div>
<div class="t" style="left:301px;top:650px;font-size:12.5px;color:#111">Status text</div>
<div class="t" style="left:595px;top:609px;font-size:12.5px;color:#111">&lt;?xml ...</div>
<div class="t" style="left:686px;top:475px;font-size:14px;color:#111">&lt;/&gt;XML/XPath</div>
<div class="t" style="left:690.5px;top:502px;font-size:12.5px;color:#111">XPath Items</div>
<div class="t" style="left:699px;top:523px;font-size:12.5px;color:#111">USD</div>
<div class="t" style="left:699px;top:544px;font-size:12.5px;color:#111">JPY</div>
<div class="t" style="left:699px;top:565px;font-size:12.5px;color:#111">HKD</div>
<div class="t" style="left:690.5px;top:589px;font-size:12.5px;color:#111">XML-Doc</div>
<div class="t" style="left:699px;top:610px;font-size:12.5px;color:#111">XML</div>
<div class="t" style="left:998.5px;top:539px;font-size:14px;color:#111">Database</div>
<svg style="left:977px;top:534px" width="18" height="21"><g fill="#777"><ellipse cx="9" cy="3.6" rx="8.5" ry="3.4"/><path d="M0.5 5.2 C2 8.5 16 8.5 17.5 5.2 V9.6 C16 12.8 2 12.8 0.5 9.6Z"/><path d="M0.5 11.2 C2 14.5 16 14.5 17.5 11.2 V16 C16 20.5 2 20.5 0.5 16Z"/></g></svg>
<div class="t" style="left:981.5px;top:566px;font-size:12.5px;color:#111">Type: Insert</div>
<div class="t" style="left:981.5px;top:582px;font-size:12.5px;color:#111;letter-spacing:-0.22px">DB access data: Sales</div>
<div class="t" style="left:981.5px;top:598px;font-size:12.5px;color:#111">Table: TBL_Forex</div>
<div class="t" style="left:981.5px;top:624px;font-size:12.5px;color:#111">Columns</div>
<div class="t" style="left:989px;top:645px;font-size:12.5px;color:#111">USD</div>
<div class="t" style="left:989px;top:666px;font-size:12.5px;color:#111">JPY</div>
<div class="t" style="left:989px;top:687px;font-size:12.5px;color:#111">HKD</div>
<div class="t" style="left:989px;top:708px;font-size:12.5px;color:#111">Timestamp</div>
<div class="t" style="left:882px;top:583px;font-size:12.5px;color:#111">1.0842</div>
<div class="t" style="left:882px;top:604px;font-size:12.5px;color:#111">115.52</div>
<div class="t" style="left:882px;top:625px;font-size:12.5px;color:#111">8.4029</div>
<div class="t" style="left:880px;top:709px;font-size:12.5px;color:#111">30.04....</div>
<div class="t" style="left:710px;top:677px;font-size:14px;color:#111">Variables</div>
<svg style="left:690px;top:675px" width="18" height="17"><g fill="#f2a95b"><rect x="0" y="12.5" width="4" height="4"/><rect x="4.8" y="8" width="4" height="4"/><rect x="4.8" y="12.5" width="4" height="4"/><rect x="9.6" y="8" width="4" height="4"/><rect x="9.6" y="12.5" width="4" height="4"/><rect x="13" y="0" width="4" height="3.5"/><rect x="13" y="4.3" width="4" height="3.5"/><rect x="13" y="8.5" width="4" height="3.5"/><rect x="13" y="12.7" width="4" height="3.8"/></g></svg>
<div class="t" style="left:701px;top:709px;font-size:12.5px;color:#111">SystemTime</div>
<div class="t" style="left:310px;top:769px;font-size:14px;color:#111">Cron trigger</div>
<svg style="left:287px;top:764px" width="22" height="21"><rect x="1.4" y="3" width="13" height="15" rx="1.5" fill="#fff" stroke="#151515" stroke-width="1.8"/><rect x="1.4" y="3" width="13" height="3.6" fill="#151515"/><g fill="#151515"><rect x="3.6" y="0.6" width="1.8" height="3.6"/><rect x="7" y="0.3" width="1.8" height="3.6"/><rect x="10.4" y="0.6" width="1.8" height="3.6"/><rect x="4.2" y="9.5" width="2.6" height="2.5"/><rect x="7.6" y="9.5" width="2.6" height="2.5"/><rect x="11" y="9.5" width="2.6" height="2.5"/><rect x="4.2" y="13" width="2.6" height="2.5"/><rect x="7.6" y="13" width="2.6" height="2.5"/></g><circle cx="16.4" cy="15.2" r="4.2" fill="#fff" stroke="#151515" stroke-width="1.6"/><path d="M16.3 13V15.4H17.8" fill="none" stroke="#c09080" stroke-width="0.8"/><path d="M20.5 1.5L16.8 6.2H18.8L15.8 9" fill="none" stroke="#f0b860" stroke-width="1"/></svg>
<div class="t" style="left:291.5px;top:796px;font-size:12.5px;color:#111;letter-spacing:0.2px">Every 5 minutes</div>
<!-- RIGHT PANEL -->
<div class="a" style="left:1220px;top:60px;width:211px;height:835px;border:1px solid #a5a5a5;background:#fff"></div>
<div class="a" style="left:1221px;top:90px;width:209px;height:2px;background:#468062"></div>
<div class="t" style="left:1233px;top:69px;font-size:13.5px;color:#222">Transfer Objects</div>
<svg style="left:1390px;top:72px" width="10" height="10"><rect x="2.5" y="0.5" width="4.2" height="5" fill="none" stroke="#707070" stroke-width="1"/><rect x="4.3" y="0.5" width="2.4" height="5" fill="#707070"/><path d="M1 5.9H8M4.5 6V8" stroke="#707070" stroke-width="1.2"/></svg>
<svg style="left:1409px;top:72px" width="9" height="8"><path d="M0.5 0.3L8.5 7.2M8.5 0.3L0.5 7.2" stroke="#707070" stroke-width="1.5"/></svg>
<svg style="left:1234px;top:108px" width="22" height="22"><circle cx="13.5" cy="7" r="4.6" fill="none" stroke="#d4d4d4" stroke-width="1.6"/><path d="M10.3 10.5L3 17.7" stroke="#d4d4d4" stroke-width="1.8"/></svg>
<div class="a" style="left:1412px;top:147px;width:17px;height:746px;background:#efefef"></div>
<svg style="left:1415px;top:151px" width="10" height="7"><path d="M1 5.5L5 1.5L9 5.5" fill="none" stroke="#c2c2c2" stroke-width="1.6"/></svg>
<svg style="left:1415px;top:880px" width="10" height="7"><path d="M1 1.5L5 5.5L9 1.5" fill="none" stroke="#c2c2c2" stroke-width="1.6"/></svg>
<div class="a" style="left:1221px;top:147px;width:190px;height:746px;overflow:hidden">
<div class="t" style="left:45.5px;top:-1.5px;font-size:11px;letter-spacing:-0.15px;color:#858585">Script</div>
<svg style="left:26px;top:-4px" width="18" height="18"><rect x="2.5" y="5" width="9" height="8.5" fill="#ececec"/><path d="M2.6 5V13.6H7.5" fill="none" stroke="#9a9a9a" stroke-width="1.3"/><path d="M5 5.5C4.5 7.5 5 9 6.5 10M9.5 5.5V7" fill="none" stroke="#aaa" stroke-width="0.9"/><path d="M8.2 15 L9 12 L14.4 6.6 L16.6 8.8 L11.2 14.2 Z" fill="#8a8a8a"/></svg>
<div class="t" style="left:45.5px;top:22.5px;font-size:11px;letter-spacing:-0.15px;color:#858585">Variables</div>
<svg style="left:26px;top:20px" width="18" height="18"><g fill="#b5b5b5"><rect x="0" y="12" width="3.5" height="3.5"/><rect x="4.5" y="8" width="3.5" height="3.5"/><rect x="4.5" y="12" width="3.5" height="3.5"/><rect x="9" y="8" width="3.5" height="3.5"/><rect x="9" y="12" width="3.5" height="3.5"/><rect x="11" y="0" width="3.5" height="3.5"/><rect x="11" y="4" width="3.5" height="3.5"/></g></svg>
<div class="t" style="left:45.5px;top:46.5px;font-size:11px;letter-spacing:-0.15px;color:#858585">Constant Values</div>
<svg style="left:26px;top:44px" width="18" height="18"><circle cx="8" cy="8.5" r="5.9" fill="#c6c6c6"/></svg>
<div class="t" style="left:45.5px;top:70.5px;font-size:11px;letter-spacing:-0.15px;color:#858585">Calculator</div>
<svg style="left:26px;top:68px" width="18" height="18"><rect x="4" y="1.5" width="10" height="14" fill="#b5b5b5"/><rect x="5" y="3" width="8" height="2.5" fill="#d8d8d8"/><g fill="#fff"><rect x="5.3" y="7" width="1.5" height="1.5"/><rect x="8.3" y="7" width="1.5" height="1.5"/><rect x="11.3" y="7" width="1.5" height="1.5"/><rect x="5.3" y="10" width="1.5" height="1.5"/><rect x="8.3" y="10" width="1.5" height="1.5"/><rect x="11.3" y="10" width="1.5" height="1.5"/><rect x="5.3" y="13" width="1.5" height="1.5"/><rect x="8.3" y="13" width="1.5" height="1.5"/><rect x="11.3" y="13" width="1.5" height="1.5"/></g></svg>
<div class="t" style="left:45.5px;top:94.5px;font-size:11px;letter-spacing:-0.15px;color:#858585">Text Replace</div>
<svg style="left:26px;top:92px" width="18" height="18"><text x="0" y="13" font-size="14" font-family="Liberation Sans" fill="#999">{</text><text x="12" y="13" font-size="14" font-family="Liberation Sans" fill="#999">}</text><circle cx="9" cy="8.5" r="3.5" fill="none" stroke="#999" stroke-width="1.4"/></svg>
<div class="t" style="left:45.5px;top:118.5px;font-size:11px;letter-spacing:-0.15px;color:#858585">JSON Read</div>
<svg style="left:26px;top:116px" width="18" height="18"><text x="0" y="13.5" font-size="14" font-family="Liberation Sans" fill="#999">{</text><text x="12" y="13.5" font-size="14" font-family="Liberation Sans" fill="#999">}</text><path d="M10 3V11C10 13 7 13 6.5 12" fill="none" stroke="#999" stroke-width="1.3"/></svg>
<div class="t" style="left:45.5px;top:142.5px;font-size:11px;letter-spacing:-0.15px;color:#858585">JSON Write</div>
<svg style="left:26px;top:140px" width="18" height="18"><text x="0" y="13.5" font-size="14" font-family="Liberation Sans" fill="#999">{</text><text x="12" y="13.5" font-size="14" font-family="Liberation Sans" fill="#999">}</text><path d="M10 3V11C10 13 7 13 6.5 12" fill="none" stroke="#999" stroke-width="1.3"/></svg>
<div class="t" style="left:45.5px;top:166.5px;font-size:11px;letter-spacing:-0.15px;color:#858585">XML/XPath</div>
<svg style="left:26px;top:164px" width="18" height="18"><text x="0" y="12.5" font-size="11" font-family="Liberation Sans" fill="#555">&lt;/&gt;</text></svg>
<div class="t" style="left:45.5px;top:190.5px;font-size:11px;letter-spacing:-0.15px;color:#858585">Note</div>
<svg style="left:26px;top:188px" width="18" height="18"><path d="M2 5H12V12L9 15H2Z" fill="#c2c2c2"/><path d="M9 15V12H12" fill="#e0e0e0"/><path d="M11 6L15 2M12.5 1.5L15.5 4.5" stroke="#888" stroke-width="1.2"/></svg>
<div class="t" style="left:45.5px;top:214.5px;font-size:11px;letter-spacing:-0.15px;color:#858585">Rest</div>
<svg style="left:26px;top:212px" width="18" height="18"><g transform="translate(0,1) scale(0.8)"><path d="M3.5 13.5 C0.5 13.5 0.5 9 3 8.5 C3 5 6 3.5 8 4.5 C9 1.5 14 1 15.5 4.5 C18 4 20 6 19.5 9 C21.5 10 21 13.5 18.5 13.5Z" fill="#fff" stroke="#777" stroke-width="1.1"/><text x="6" y="12" font-size="6.5" font-family="Liberation Sans" fill="#555">{R}</text></g></svg>
<div class="t" style="left:45.5px;top:238.5px;font-size:11px;letter-spacing:-0.15px;color:#858585">CSV</div>
<svg style="left:26px;top:236px" width="18" height="18"><path d="M3 1H11L14 4V16H3Z" fill="#fff" stroke="#888" stroke-width="1"/><rect x="0.5" y="6" width="15" height="6" fill="#444"/><text x="1.8" y="11" font-size="5.2" font-weight="bold" font-family="Liberation Sans" fill="#fff">CSV</text></svg>
<div class="t" style="left:45.5px;top:262.5px;font-size:11px;letter-spacing:-0.15px;color:#858585">RFID Reader</div>
<svg style="left:26px;top:260px" width="18" height="18"><rect x="1" y="1" width="15" height="15" rx="1" fill="#fff" stroke="#aaa"/><path d="M3 10A7 7 0 0 1 10 3M5 10A5 5 0 0 1 10 5M7 10A3 3 0 0 1 10 7" fill="none" stroke="#bbb" stroke-width="1.2"/><path d="M10 14L15 8" stroke="#999" stroke-width="1"/></svg>
<svg style="left:15px;top:264px" width="5" height="8"><path d="M0 0L4.5 4L0 8Z" fill="#666"/></svg>
<div class="t" style="left:45.5px;top:334.5px;font-size:11px;letter-spacing:-0.15px;color:#858585">Database trigger</div>
<svg style="left:26px;top:332px" width="18" height="18"><ellipse cx="7.5" cy="3.5" rx="6.5" ry="3" fill="#aaa"/><path d="M1 5C2 8 13 8 14 5V9C13 12 2 12 1 9Z M1 10.5C2 13.5 13 13.5 14 10.5V14C13 17 2 17 1 14Z" fill="#aaa"/><path d="M16 6L10 12.5L12 13L8 17" fill="none" stroke="#ccc" stroke-width="1.3"/></svg>
<div class="t" style="left:45.5px;top:358.5px;font-size:11px;letter-spacing:-0.15px;color:#858585">Time trigger</div>
<svg style="left:26px;top:356px" width="18" height="18"><path d="M13 4A7 7 0 1 0 9 15.5" fill="none" stroke="#bbb" stroke-width="1.6"/><path d="M8 4.5V9H5" fill="none" stroke="#888" stroke-width="1.3"/><path d="M16 7L11 12.5L13 13L9 17" fill="none" stroke="#bbb" stroke-width="1.3"/></svg>
<div class="t" style="left:45.5px;top:382.5px;font-size:11px;letter-spacing:-0.15px;color:#858585">Cron trigger</div>
<svg style="left:26px;top:380px" width="18" height="18"><rect x="1" y="3.5" width="12" height="12" rx="1" fill="none" stroke="#444" stroke-width="1.6"/><g fill="#444"><rect x="3" y="1" width="1.5" height="4"/><rect x="6" y="0.5" width="1.5" height="4"/><rect x="9" y="1" width="1.5" height="4"/><rect x="3" y="7.5" width="2" height="2"/><rect x="6" y="7.5" width="2" height="2"/><rect x="3" y="10.5" width="2" height="2"/><rect x="6" y="10.5" width="2" height="2"/></g><circle cx="13" cy="14" r="3.5" fill="#fff" stroke="#444" stroke-width="1.4"/><path d="M12 5L15 1M13 6L16.5 2" stroke="#bbb" stroke-width="1"/></svg>
<div class="t" style="left:45.5px;top:406.5px;font-size:11px;letter-spacing:-0.15px;color:#858585">Euromap77 trigger</div>
<svg style="left:26px;top:404px" width="18" height="18"><circle cx="8.5" cy="8.5" r="7.5" fill="#c4c4c4"/><path d="M8.5 3L13 12H4Z" fill="#dadada"/></svg>
<svg style="left:15px;top:408px" width="5" height="8"><path d="M0 0L4.5 4L0 8Z" fill="#666"/></svg>
<div class="t" style="left:45.5px;top:430.5px;font-size:11px;letter-spacing:-0.15px;color:#858585">OPC trigger</div>
<svg style="left:26px;top:428px" width="18" height="18"><path d="M1 11A7.5 7.5 0 0 1 16 11" fill="none" stroke="#aaa" stroke-width="1.5"/><path d="M3.5 11A5 5 0 0 1 13.5 11" fill="none" stroke="#aaa" stroke-width="1"/><path d="M8.5 11L12 6" stroke="#888" stroke-width="1.3"/><path d="M16 9L11 14L13 14.5L9 18" fill="none" stroke="#bbb" stroke-width="1.2"/></svg>
<svg style="left:15px;top:432px" width="5" height="8"><path d="M0 0L4.5 4L0 8Z" fill="#666"/></svg>
<div class="t" style="left:45.5px;top:454.5px;font-size:11px;letter-spacing:-0.15px;color:#858585">SAP trigger</div>
<svg style="left:26px;top:452px" width="18" height="18"><rect x="0.5" y="2" width="16" height="11" fill="#999"/><text x="1.2" y="11" font-size="8" font-weight="bold" font-family="Liberation Sans" fill="#e8e8e8">SAP</text><path d="M16 8L11 13L13 13.5L9 17" fill="none" stroke="#ccc" stroke-width="1.2"/></svg>
<svg style="left:15px;top:456px" width="5" height="8"><path d="M0 0L4.5 4L0 8Z" fill="#666"/></svg>
<div class="t" style="left:45.5px;top:478.5px;font-size:11px;letter-spacing:-0.15px;color:#858585">Heidenhain trigger</div>
<svg style="left:26px;top:476px" width="18" height="18"><rect x="1" y="0.5" width="15" height="2" fill="#777"/><path d="M8.5 3V8M5.5 6L8.5 9.5L11.5 6" fill="none" stroke="#777" stroke-width="1.6"/><path d="M1 12V15.5H16V12" fill="none" stroke="#999" stroke-width="1.2"/><path d="M4 13V15M7 13V15M10 13V15M13 13V15" stroke="#999" stroke-width="0.8"/><path d="M16 7L11 12L13 12.5L9 16" fill="none" stroke="#bbb" stroke-width="1.2"/></svg>
<svg style="left:15px;top:480px" width="5" height="8"><path d="M0 0L4.5 4L0 8Z" fill="#666"/></svg>
<div class="t" style="left:45.5px;top:502.5px;font-size:11px;letter-spacing:-0.15px;color:#858585">MQTT trigger</div>
<svg style="left:26px;top:500px" width="18" height="18"><rect x="1" y="1" width="13" height="13" fill="#c4c4c4"/><path d="M1 4A9 9 0 0 1 11 14M1 8A5 5 0 0 1 7 14" fill="none" stroke="#e6e6e6" stroke-width="1.4"/><path d="M16 8L11 13L13 13.5L9 17" fill="none" stroke="#bbb" stroke-width="1.2"/></svg>
<div class="t" style="left:45.5px;top:526.5px;font-size:11px;letter-spacing:-0.15px;color:#858585">Telegram trigger</div>
<svg style="left:26px;top:524px" width="18" height="18"><circle cx="8.5" cy="8.5" r="7.5" fill="#a8a8a8"/><path d="M4 8.5L13 5L11 13L8.5 10.5Z" fill="#fff"/></svg>
<div class="t" style="left:45.5px;top:550px;font-size:11px;line-height:12px;letter-spacing:-0.1px;color:#858585;white-space:normal;width:140px">ThingWorx® Service<br>trigger</div>
<svg style="left:26px;top:551.5px" width="18" height="18"><path d="M3 5A7 7 0 0 1 14 5M5 7A4 4 0 0 1 12 7" fill="none" stroke="#999" stroke-width="1.2"/><circle cx="8.5" cy="9" r="1" fill="#999"/><path d="M2 12.5H15M12 10.5L15 12.5M2 15.5H15M5 17.5L2 15.5" fill="none" stroke="#999" stroke-width="1.2"/></svg>
<div class="t" style="left:45.5px;top:584.5px;font-size:11px;letter-spacing:-0.15px;color:#858585">Script trigger</div>
<svg style="left:26px;top:582px" width="18" height="18"><rect x="1" y="1" width="12" height="14" fill="#fff" stroke="#aaa" stroke-width="1.2"/><path d="M5 4C4 6 4 8 5 10M9 4C10 6 10 8 9 10" fill="none" stroke="#aaa" stroke-width="1"/><path d="M16 7L11 12L13 12.5L9 17" fill="none" stroke="#ccc" stroke-width="1.3"/></svg>
<div class="t" style="left:45.5px;top:608.5px;font-size:11px;letter-spacing:-0.15px;color:#858585">Charm trigger</div>
<svg style="left:26px;top:606px" width="18" height="18"><rect x="1" y="5" width="11" height="9" fill="#c8c8c8" stroke="#999"/><rect x="11" y="1" width="4" height="13" fill="#aaa"/><path d="M15 10L11 14L13 14.5L10 17" fill="none" stroke="#ccc" stroke-width="1"/></svg>
<svg style="left:15px;top:610px" width="5" height="8"><path d="M0 0L4.5 4L0 8Z" fill="#666"/></svg>
<div class="t" style="left:45.5px;top:632.5px;font-size:11px;letter-spacing:-0.15px;color:#858585">Network File Access trigger</div>
<svg style="left:26px;top:630px" width="18" height="18"><path d="M1 1H9L12 4V6H1Z" fill="#fff" stroke="#999"/><rect x="1" y="8" width="9" height="3" fill="#999"/><rect x="1" y="13" width="9" height="3" fill="#999"/><path d="M16 7L11 12L13 12.5L9 17" fill="none" stroke="#bbb" stroke-width="1.3"/></svg>
<div class="t" style="left:45.5px;top:656.5px;font-size:11px;letter-spacing:-0.15px;color:#858585">File trigger</div>
<svg style="left:26px;top:654px" width="18" height="18"><path d="M1 1H11L14 4V14H1Z" fill="#fff" stroke="#999" stroke-width="1.4"/><rect x="4" y="1.5" width="6" height="4" fill="none" stroke="#999"/><path d="M16 7L11 12L13 12.5L9 17" fill="none" stroke="#ccc" stroke-width="1.3"/></svg>
<div class="t" style="left:45.5px;top:680.5px;font-size:11px;letter-spacing:-0.15px;color:#858585">Barcode reader trigger</div>
<svg style="left:26px;top:678px" width="18" height="18"><path d="M1 1V14M3 3V14M5 3V14M7 6V14" stroke="#999" stroke-width="1.1"/><path d="M7 2H13L15 6L11 8Z" fill="#aaa"/><path d="M16 8L11 13L13 13.5L9 17" fill="none" stroke="#ccc" stroke-width="1.2"/></svg>
<svg style="left:15px;top:682px" width="5" height="8"><path d="M0 0L4.5 4L0 8Z" fill="#666"/></svg>
<div class="t" style="left:45.5px;top:704.5px;font-size:11px;letter-spacing:-0.15px;color:#858585">RFID Reader trigger</div>
<svg style="left:26px;top:702px" width="18" height="18"><rect x="1" y="1" width="15" height="15" rx="1" fill="#fff" stroke="#aaa"/><path d="M3 10A7 7 0 0 1 10 3M5 10A5 5 0 0 1 10 5M7 10A3 3 0 0 1 10 7" fill="none" stroke="#bbb" stroke-width="1.2"/><path d="M10 14L15 8" stroke="#999" stroke-width="1"/></svg>
<svg style="left:15px;top:706px" width="5" height="8"><path d="M0 0L4.5 4L0 8Z" fill="#666"/></svg>
<div class="t" style="left:45.5px;top:728.5px;font-size:11px;letter-spacing:-0.15px;color:#858585">Rest trigger</div>
<svg style="left:26px;top:726px" width="18" height="18"><path d="M3 12C0.5 12 0.5 8 3 7.5C3 4.5 6 3 8 4C9 1 14 0.5 15 4C17.5 3.5 19 6 18 8" fill="none" stroke="#777" stroke-width="0.9"/><text x="5" y="10.5" font-size="6" font-family="Liberation Sans" fill="#555">{R}</text><path d="M16 8L11 13L13 13.5L9 17" fill="none" stroke="#bbb" stroke-width="1.3"/></svg>
</div>
<div class="t" style="left:1233px;top:452px;font-size:13.5px;color:#8a8a8a">Triggers</div>
<svg style="left:1384px;top:454px" width="12" height="9"><path d="M1.5 7.5L5.5 3L9.5 7.5" fill="none" stroke="#555" stroke-width="1.6"/></svg>
<!-- STATUS BAR -->
<div class="a" style="left:0;top:897px;width:1434px;height:24px;background:#548669;border-left:1px solid #1f5840;border-right:1px solid #1f5840;border-bottom:1px solid #2a5e46"></div>
<div class="a" style="left:10px;top:902px;width:14px;height:14px;border-radius:50%;background:#77a993;border:2px solid #8a8a8a"></div>
<div class="t" style="left:30px;top:904px;font-size:11px;letter-spacing:-0.05px;color:#f4f4f4">OPC Router started.</div>
<svg style="left:1422px;top:909px" width="10" height="10"><g fill="#d6cdd6"><rect x="6" y="0" width="2" height="2"/><rect x="3" y="3" width="2" height="2"/><rect x="6" y="3" width="2" height="2"/><rect x="0" y="6" width="2" height="2"/><rect x="3" y="6" width="2" height="2"/><rect x="6" y="6" width="2" height="2"/></g></svg>
</body></html>
